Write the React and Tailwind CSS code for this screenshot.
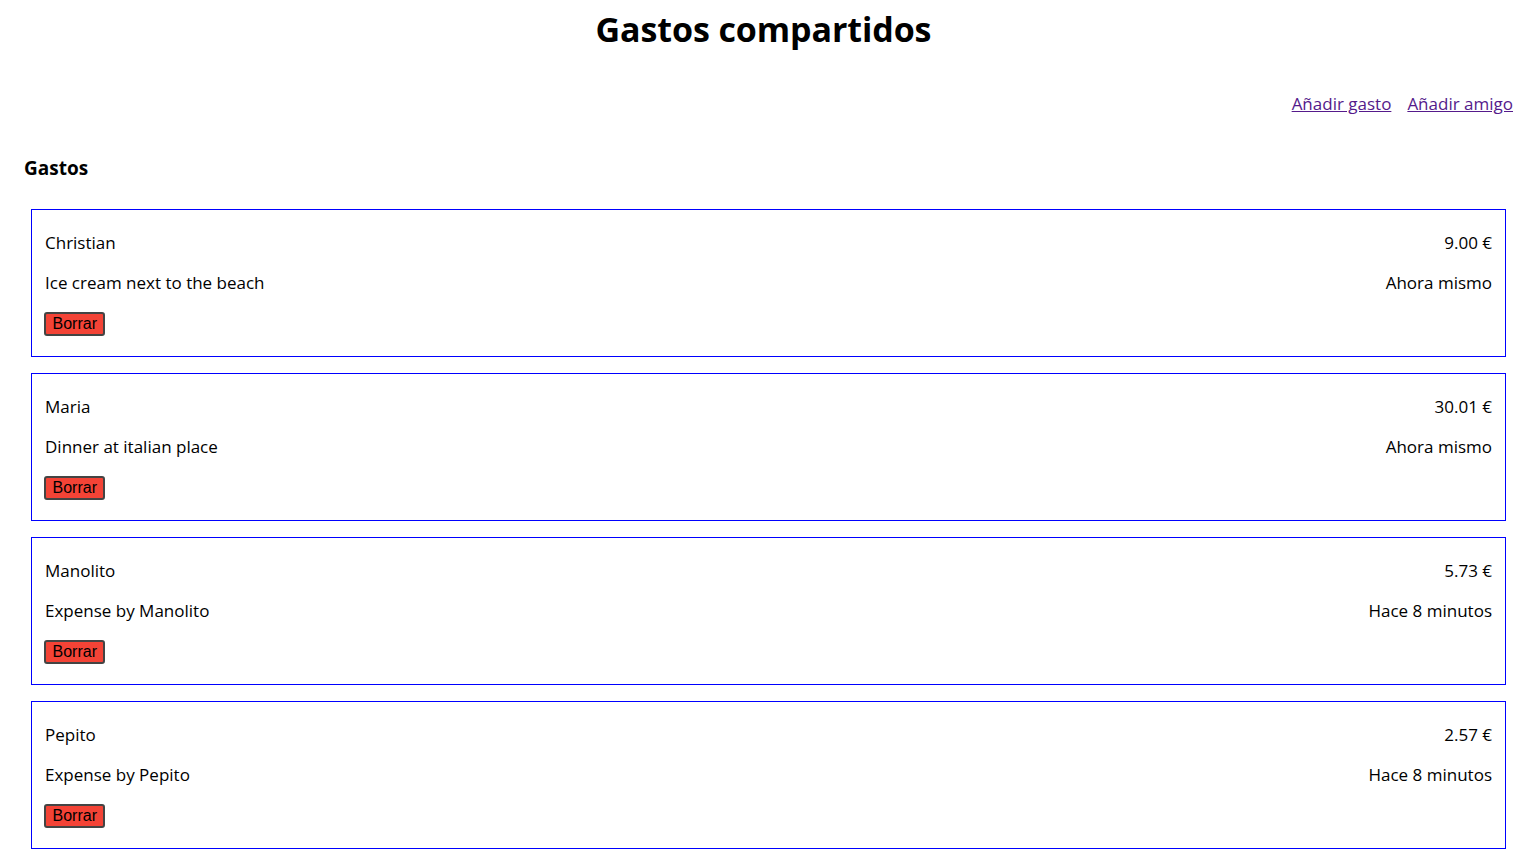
import React from "react";

const gastos = [
  { name: "Christian", desc: "Ice cream next to the beach", amount: "9.00 €", when: "Ahora mismo" },
  { name: "Maria", desc: "Dinner at italian place", amount: "30.01 €", when: "Ahora mismo" },
  { name: "Manolito", desc: "Expense by Manolito", amount: "5.73 €", when: "Hace 8 minutos" },
  { name: "Pepito", desc: "Expense by Pepito", amount: "2.57 €", when: "Hace 8 minutos" },
];

export default function App() {
  return (
    <div className="min-h-screen bg-white text-black font-['Open_Sans',sans-serif]">
      <h1 className="text-center text-[34px] font-bold leading-[42px] pt-[8px] tracking-[-0.1px]">
        Gastos compartidos
      </h1>
      <nav className="flex justify-end gap-[16px] pr-[14px] mt-[42px] text-[17px] leading-[24px]">
        <a href="#" className="text-[#551a8b] underline">Añadir gasto</a>
        <a href="#" className="text-[#551a8b] underline">Añadir amigo</a>
      </nav>
      <h2 className="pl-[24px] mt-[39px] text-[19px] font-bold leading-[26px]">Gastos</h2>
      <div className="pl-[31px] pr-[21px] mt-[28px] flex flex-col gap-[16px]">
        {gastos.map((g) => (
          <div key={g.name} className="border border-[#0000ff] pt-[21px] pb-[22px] px-[13px] text-[17px]">
            <div className="flex justify-between leading-[24px] h-[24px]">
              <span>{g.name}</span>
              <span>{g.amount}</span>
            </div>
            <div className="flex justify-between leading-[24px] h-[24px] mt-[16px]">
              <span>{g.desc}</span>
              <span>{g.when}</span>
            </div>
            <div className="mt-[15px] h-[24px] -ml-px">
              <button className="h-[24px] px-[6.5px] bg-[#f44336] border-2 border-[#444] rounded-[3px] font-['Liberation_Sans',sans-serif] text-[16px] leading-[18px] text-black">
                Borrar
              </button>
            </div>
          </div>
        ))}
      </div>
    </div>
  );
}
